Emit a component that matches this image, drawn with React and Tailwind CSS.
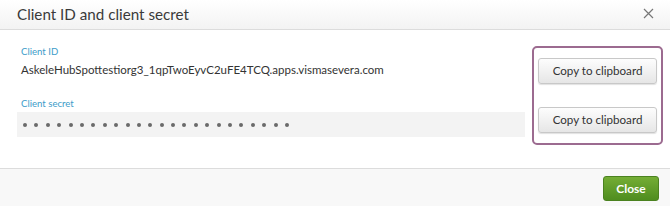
import React from 'react';

const font = { fontFamily: 'Lato, "Open Sans", sans-serif' };

function CopyButton() {
  return (
    <button className="h-[26px] w-[119px] rounded-[3px] border border-[#c8c8c8] bg-gradient-to-b from-[#fdfdfd] to-[#e6e6e6] text-[11.6px] text-[#333] shadow-[0_1px_1px_rgba(0,0,0,0.12)]">
      Copy to clipboard
    </button>
  );
}

export default function App() {
  const secret = Array.from({ length: 24 });
  return (
    <div className="flex h-[206px] w-[670px] flex-col bg-white" style={font}>
      <div className="flex h-[30px] items-center justify-between border-b border-[#dcdcdc] bg-gradient-to-b from-white to-[#f3f3f3] pl-[17px] pr-[16px]">
        <h1 className="text-[15.2px] leading-none text-[#3a3a3a]">Client ID and client secret</h1>
        <svg width="11" height="11" viewBox="0 0 11 11" className="mt-[-3px] text-[#777]">
          <path d="M1 1L10 10M10 1L1 10" stroke="currentColor" strokeWidth="1.2" />
        </svg>
      </div>

      <div className="flex flex-1 items-start justify-between pl-[17px] pr-[7px] pt-[15px]">
        <div className="flex w-[508px] flex-col">
          <div className="pl-[4px] text-[9.6px] leading-[14px] text-[#3d9cc9]">Client ID</div>
          <div className="mt-[3px] pl-[4px] text-[11.5px] leading-[16px] text-[#333]">
            AskeleHubSpottestiorg3_1qpTwoEyvC2uFE4TCQ.apps.vismasevera.com
          </div>
          <div className="mt-[19px] pl-[4px] text-[9.6px] leading-[14px] text-[#3d9cc9]">Client secret</div>
          <div className="mt-[1px] flex h-[25px] items-center gap-[7.4px] bg-[#f3f3f3] pl-[6px]">
            {secret.map((_, i) => (
              <span key={i} className="h-[4px] w-[4px] rounded-full bg-[#6a6a6a]" />
            ))}
          </div>
        </div>
        <div className="mt-[1px] flex h-[99px] w-[131px] flex-col items-center justify-between rounded-[5px] border-2 border-[#9c6b90] px-[2px] py-[10px]">
          <CopyButton />
          <CopyButton />
        </div>
      </div>

      <div className="flex h-[38px] items-center justify-end border-t border-[#dcdcdc] bg-[#f8f8f8] pr-[11px]">
        <button className="mt-[2px] h-[25px] w-[56px] rounded-[3px] border border-[#4b8220] bg-gradient-to-b from-[#74ad35] to-[#4f8d1f] text-[12px] font-bold text-white">
          Close
        </button>
      </div>
    </div>
  );
}
